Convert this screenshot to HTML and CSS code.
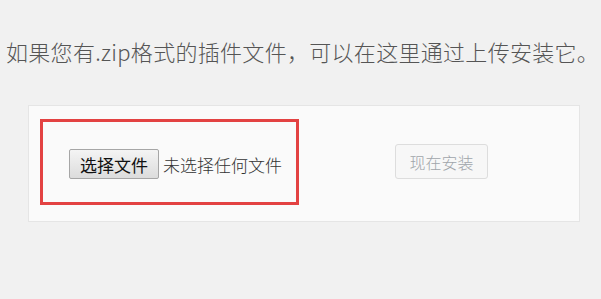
FILE: index.html
```html
<!DOCTYPE html>
<html lang="zh-CN">
  <head>
    <meta charset="UTF-8" />
    <meta name="viewport" content="width=device-width, initial-scale=1.0" />
    <title>上传插件</title>
    <link rel="stylesheet" href="styles.css">
  </head>
  <body>
    <p class="install-help">如果您有.zip格式的插件文件，可以在这里通过上传安装它。</p>
    <form class="upload-form">
      <!-- highlighted file picker -->
      <div class="file-box">
        <button type="button" class="file-button">选择文件</button>
        <span class="file-name">未选择任何文件</span>
      </div>
      <button type="submit" class="install-button" disabled>现在安装</button>
    </form>
  </body>
</html>
```

FILE: styles.css
```css
body {
  margin: 0;
  padding: 0;
  background-color: #f1f1f1;
  font-family: "Microsoft YaHei", "Noto Sans CJK SC", "Noto Sans", sans-serif;
}
.install-help {
  margin: 36px 0 0 6px;
  font-size: 22px;
  font-weight: 300;
  letter-spacing: 0.3px;
  line-height: 30px;
  color: #555;
  white-space: nowrap;
}
.upload-form {
  display: flex;
  align-items: flex-start;
  width: 552px;
  box-sizing: border-box;
  margin: 39px 0 0 28px;
  padding: 13px 11px 16px;
  background: #fafafa;
  border: 1px solid #e5e5e5;
}
.file-box {
  display: flex;
  align-items: center;
  width: 259px;
  height: 86px;
  box-sizing: border-box;
  padding: 4px 0 0 26px;
  border: 3px solid #e34242;
}
.file-button {
  height: 30px;
  width: 90px;
  padding: 0;
  font-family: inherit;
  font-size: 17px;
  color: #111;
  background: linear-gradient(#f4f4f4, #dcdcdc);
  border: 1px solid #a6a6a6;
  border-radius: 2px;
}
.file-name {
  margin-left: 4px;
  font-size: 17px;
  font-weight: 300;
  color: #333;
}
.install-button {
  margin: 25px 0 0 96px;
  width: 93px;
  height: 35px;
  padding: 0;
  font-family: inherit;
  font-size: 16px;
  font-weight: 300;
  color: #a0a5aa;
  background: #f7f7f7;
  border: 1px solid #ddd;
  border-radius: 3px;
}
```
